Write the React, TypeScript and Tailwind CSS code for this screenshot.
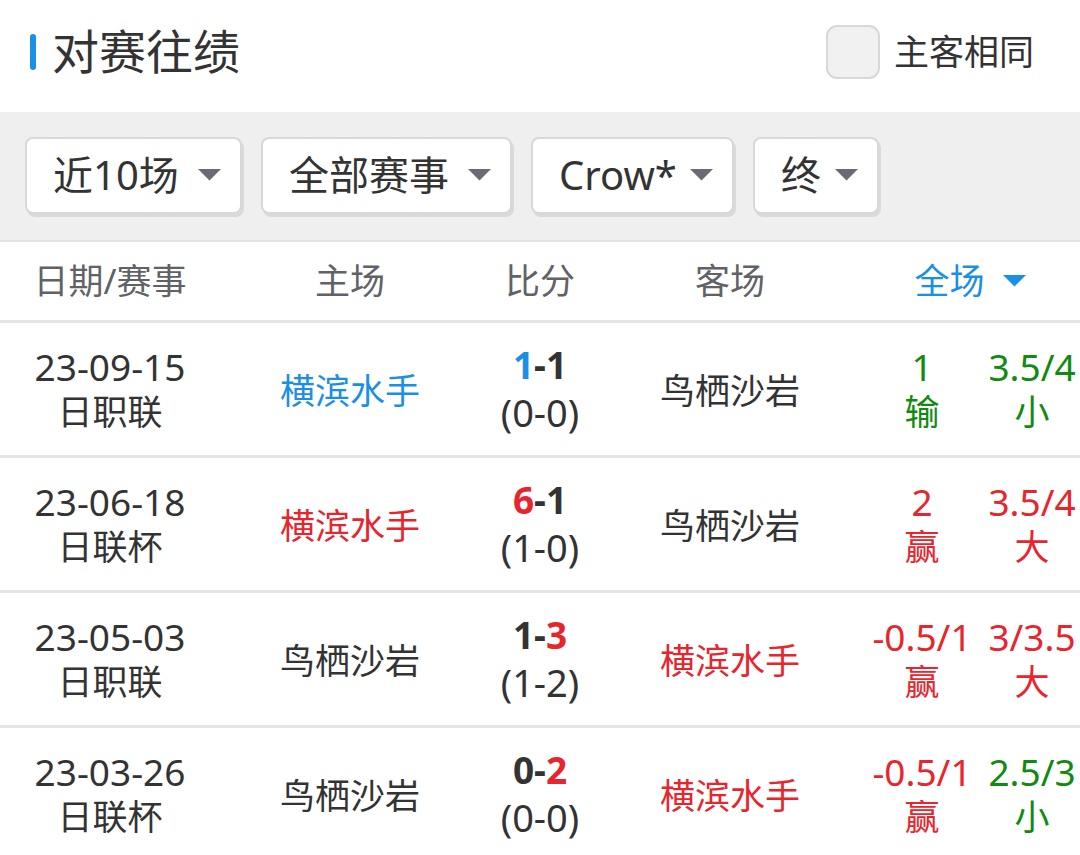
import React from "react";

const FONT = { fontFamily: '"Noto Sans", "Noto Sans CJK SC", sans-serif' };

const BLUE = "text-[#1a8fe6]";
const RED = "text-[#e8242c]";
const GREEN = "text-[#108a10]";
const DARK = "text-[#333333]";

type Row = {
  date: string;
  league: string;
  home: string;
  homeColor: string;
  away: string;
  awayColor: string;
  hs: string;
  hsColor: string;
  as: string;
  asColor: string;
  half: string;
  hcp: string;
  hcpRes: string;
  hcpColor: string;
  ou: string;
  ouRes: string;
  ouColor: string;
};

const ROWS: Row[] = [
  {
    date: "23-09-15", league: "日职联",
    home: "横滨水手", homeColor: BLUE, away: "鸟栖沙岩", awayColor: DARK,
    hs: "1", hsColor: BLUE, as: "1", asColor: DARK, half: "(0-0)",
    hcp: "1", hcpRes: "输", hcpColor: GREEN, ou: "3.5/4", ouRes: "小", ouColor: GREEN,
  },
  {
    date: "23-06-18", league: "日联杯",
    home: "横滨水手", homeColor: RED, away: "鸟栖沙岩", awayColor: DARK,
    hs: "6", hsColor: RED, as: "1", asColor: DARK, half: "(1-0)",
    hcp: "2", hcpRes: "赢", hcpColor: RED, ou: "3.5/4", ouRes: "大", ouColor: RED,
  },
  {
    date: "23-05-03", league: "日职联",
    home: "鸟栖沙岩", homeColor: DARK, away: "横滨水手", awayColor: RED,
    hs: "1", hsColor: DARK, as: "3", asColor: RED, half: "(1-2)",
    hcp: "-0.5/1", hcpRes: "赢", hcpColor: RED, ou: "3/3.5", ouRes: "大", ouColor: RED,
  },
  {
    date: "23-03-26", league: "日联杯",
    home: "鸟栖沙岩", homeColor: DARK, away: "横滨水手", awayColor: RED,
    hs: "0", hsColor: DARK, as: "2", asColor: RED, half: "(0-0)",
    hcp: "-0.5/1", hcpRes: "赢", hcpColor: RED, ou: "2.5/3", ouRes: "小", ouColor: GREEN,
  },
];

function Caret({ className }: { className?: string }) {
  return (
    <svg width="23" height="12" viewBox="0 0 23 12" className={className}>
      <path d="M0 0 H23 L11.5 11.5 Z" fill="currentColor" />
    </svg>
  );
}

function FilterButton({ label, width }: { label: string; width: string }) {
  return (
    <button
      className={`flex h-[77px] ${width} items-center justify-between rounded-lg border-2 border-[#d8d8d8] bg-white pl-[26px] pr-[19px] shadow-[2px_3px_0_#dadada]`}
    >
      <span className="text-[40px] leading-none text-[#333333]">{label}</span>
      <Caret className="text-[#686b72]" />
    </button>
  );
}

const GRID = "grid grid-cols-[220px_260px_120px_260px_124px_96px]";

export default function App() {
  return (
    <div className="w-[1080px] bg-white" style={FONT}>
      {/* Title bar */}
      <div className="flex h-[112px] items-center justify-between pb-[9px] pl-[30px] pr-[46px]">
        <div className="flex items-center gap-[16px]">
          <div className="h-[36px] w-[6px] rounded-full bg-[#1a8fe6]" />
          <h1 className="text-[47px] leading-none text-[#333333]">对赛往绩</h1>
        </div>
        <label className="flex items-center gap-[14px]">
          <span className="h-[54px] w-[54px] rounded-[11px] border-2 border-[#d8d8d8] bg-[#f1f1f1]" />
          <span className="text-[35px] leading-none text-[#333333]">主客相同</span>
        </label>
      </div>

      {/* Filters */}
      <div className="flex h-[130px] items-center gap-[19px] border-b-2 border-[#e4e4e4] bg-[#efefef] pl-[25px] pb-[2px]">
        <FilterButton label="近10场" width="w-[217px]" />
        <FilterButton label="全部赛事" width="w-[251px]" />
        <FilterButton label="Crow*" width="w-[203px]" />
        <FilterButton label="终" width="w-[126px]" />
      </div>

      {/* Table header */}
      <div className={`${GRID} h-[81px] items-center border-b-[3px] border-[#e5e5e5] text-[35px] text-[#606266]`}>
        <div className="text-center">日期/赛事</div>
        <div className="text-center">主场</div>
        <div className="text-center">比分</div>
        <div className="text-center">客场</div>
        <div className="col-span-2 flex items-center justify-center gap-[18px] text-[#1a8fe6]">
          <span>全场</span>
          <Caret />
        </div>
      </div>

      {/* Rows */}
      {ROWS.map((r) => (
        <div
          key={r.date}
          className={`${GRID} h-[135px] items-center border-b-[3px] border-[#e5e5e5] text-center`}
        >
          <div className="flex flex-col text-[#333333]">
            <span className="text-[37px] leading-[46px]">{r.date}</span>
            <span className="text-[35px] leading-[44px]">{r.league}</span>
          </div>
          <div className={`pt-[4px] text-[35px] ${r.homeColor}`}>{r.home}</div>
          <div className="flex flex-col text-[#333333]">
            <span className="text-[37px] font-bold leading-[46px]">
              <span className={r.hsColor}>{r.hs}</span>
              <span className={DARK}>-</span>
              <span className={r.asColor}>{r.as}</span>
            </span>
            <span className="text-[38px] leading-[48px]">{r.half}</span>
          </div>
          <div className={`pt-[4px] text-[35px] ${r.awayColor}`}>{r.away}</div>
          <div className={`flex flex-col ${r.hcpColor}`}>
            <span className="whitespace-nowrap text-[37px] leading-[46px]">{r.hcp}</span>
            <span className="text-[35px] leading-[44px]">{r.hcpRes}</span>
          </div>
          <div className={`flex flex-col ${r.ouColor}`}>
            <span className="whitespace-nowrap text-[37px] leading-[46px]">{r.ou}</span>
            <span className="text-[35px] leading-[44px]">{r.ouRes}</span>
          </div>
        </div>
      ))}
    </div>
  );
}
